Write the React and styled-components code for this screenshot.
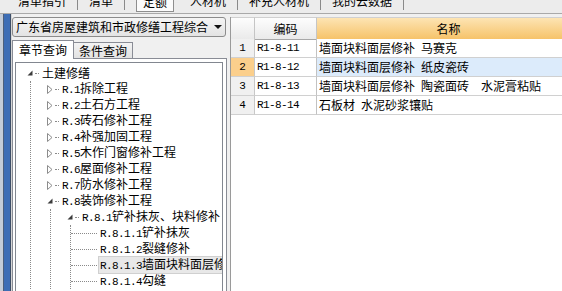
import React from "react"
import styled, { createGlobalStyle } from "styled-components"

const topTabs = [
    { label: "清单指引" },
    { sep: true },
    { label: "清单" },
    { sep: true },
    { label: "定额", active: true },
    { label: "人材机" },
    { sep: true },
    { label: "补充人材机" },
    { sep: true },
    { label: "我的云数据" },
    { sep: true },
]

const tree = [
    {
        name: "土建修缮",
        open: true,
        children: [
            { code: "R.1", name: "拆除工程", closed: true },
            { code: "R.2", name: "土石方工程", closed: true },
            { code: "R.3", name: "砖石修补工程", closed: true },
            { code: "R.4", name: "补强加固工程", closed: true },
            { code: "R.5", name: "木作门窗修补工程", closed: true },
            { code: "R.6", name: "屋面修补工程", closed: true },
            { code: "R.7", name: "防水修补工程", closed: true },
            {
                code: "R.8",
                name: "装饰修补工程",
                open: true,
                children: [
                    {
                        code: "R.8.1",
                        name: "铲补抹灰、块料修补",
                        open: true,
                        children: [
                            { code: "R.8.1.1", name: "铲补抹灰" },
                            { code: "R.8.1.2", name: "裂缝修补" },
                            { code: "R.8.1.3", name: "墙面块料面层修补", selected: true },
                            { code: "R.8.1.4", name: "勾缝" },
                        ],
                    },
                ],
            },
        ],
    },
]

// en spaces: the old bitmap font had a half-width space
const rows = [
    { no: 1, code: "R1-8-11", name: "墙面块料面层修补\u2002马赛克" },
    { no: 2, code: "R1-8-12", name: "墙面块料面层修补\u2002纸皮瓷砖", selected: true },
    { no: 3, code: "R1-8-13", name: "墙面块料面层修补\u2002陶瓷面砖\u2002\u2002水泥膏粘贴" },
    { no: 4, code: "R1-8-14", name: "石板材\u2002水泥砂浆镶贴" },
]

const Expander = ({ open }) => (
    <ExpanderBox>
        {open ? (
            <svg width="6" height="6" viewBox="0 0 6 6">
                <polygon points="5.5,0.5 5.5,5.5 0.5,5.5" fill="#3c3c3c" />
            </svg>
        ) : (
            <svg width="6" height="9" viewBox="0 0 6 9">
                <polygon points="0.5,0.5 5,4.5 0.5,8.5" fill="#fff" stroke="#8c8c8c" />
            </svg>
        )}
    </ExpanderBox>
)

const TreeNode = ({ node }) => {
    const hasKids = node.children || node.closed
    return (
        <>
            <TreeRow $leaf={!hasKids}>
                {hasKids ? <Expander open={node.open} /> : null}
                <Connector $leaf={!hasKids} />
                <NodeLabel $selected={node.selected}>
                    {node.code ? <Code>{node.code}</Code> : null}
                    {node.name}
                </NodeLabel>
            </TreeRow>
            {node.children ? (
                <Group>
                    {node.children.map((c) => (
                        <TreeNode key={c.code} node={c} />
                    ))}
                </Group>
            ) : null}
        </>
    )
}

const App = () => {
    return (
        <>
            <GlobalStyle />
            <Page>
                <TopBar>
                    <TabRow>
                        {topTabs.map((t, i) =>
                            t.sep ? <TopSep key={i} /> : <TopTab key={i} $active={t.active}>{t.label}</TopTab>
                        )}
                    </TabRow>
                </TopBar>
                <Main>
                    <EdgeStrip />
                    <LeftPanel>
                        <Combo>
                            <ComboText>广东省房屋建筑和市政修缮工程综合</ComboText>
                            <svg width="8" height="4" viewBox="0 0 8 4">
                                <polygon points="0,0 8,0 4,4" fill="#111" />
                            </svg>
                        </Combo>
                        <TabStrip>
                            <PanelTab $active>章节查询</PanelTab>
                            <PanelTab>条件查询</PanelTab>
                        </TabStrip>
                        <TabPage>
                            <TreeBox>
                                {tree.map((n) => (
                                    <TreeNode key={n.name} node={n} />
                                ))}
                            </TreeBox>
                        </TabPage>
                    </LeftPanel>
                    <Splitter />
                    <GridPane>
                        <GridHeader>
                            <HeadCell />
                            <HeadCell>编码</HeadCell>
                            <HeadCell $hot>名称</HeadCell>
                        </GridHeader>
                        {rows.map((r) => (
                            <GridRow key={r.no}>
                                <NumCell $selected={r.selected}>{r.no}</NumCell>
                                <CodeCell>{r.code}</CodeCell>
                                <NameCell $selected={r.selected}>{r.name}</NameCell>
                            </GridRow>
                        ))}
                    </GridPane>
                </Main>
            </Page>
        </>
    )
}

export default App

const GlobalStyle = createGlobalStyle`
    html, body {
        margin: 0;
        padding: 0;
        background: #f0f0f0;
        overflow: hidden;
    }
    body {
        font-family: "Noto Sans CJK SC", sans-serif;
        font-size: 12px;
        color: #000;
    }
`

const Page = styled.div`
    width: 562px;
    height: 291px;
    display: flex;
    flex-direction: column;
    overflow: hidden;
`

const TopBar = styled.div`
    height: 13px;
    flex-shrink: 0;
    overflow: hidden;
    background: #ececec;
    border-bottom: 1px solid #a9a9a9;
`

const TabRow = styled.div`
    display: flex;
    align-items: flex-start;
    gap: 11px;
    height: 19px;
    margin-top: -6px;
    padding-left: 18px;
`

const TopTab = styled.div`
    line-height: 14px;
    white-space: nowrap;
    ${(p) => p.$active && `
        height: 16px;
        padding: 0 6px;
        margin-right: 5px;
        border: 1px solid #8e8e8e;
        background: #fbfbfb;
    `}
`

const TopSep = styled.div`
    width: 1px;
    height: 16px;
    background: #8a8a8a;
`

const Main = styled.div`
    flex: 1;
    display: flex;
    min-height: 0;
`

const EdgeStrip = styled.div`
    width: 12px;
    flex-shrink: 0;
    background: linear-gradient(to right,
        #c4ccd8 0 3px, #4d5f7a 3px 4px, #3d6db5 4px 10px, #3e4f68 10px 11px, #d6d6d6 11px);
`

const LeftPanel = styled.div`
    width: 215px;
    flex-shrink: 0;
    display: flex;
    flex-direction: column;
    padding-top: 3px;
    box-sizing: border-box;
`

const Combo = styled.div`
    height: 20px;
    width: 214px;
    box-sizing: border-box;
    display: flex;
    align-items: center;
    padding: 0 3px 0 3px;
    border: 1px solid #8b8b8b;
    border-radius: 3px;
    background: linear-gradient(#f5f5f5, #e3e3e3);
`

const ComboText = styled.span`
    flex: 1;
    line-height: 18px;
    white-space: nowrap;
    overflow: hidden;
`

const TabStrip = styled.div`
    display: flex;
    align-items: flex-end;
    height: 18px;
    margin-top: 3px;
`

const PanelTab = styled.div`
    position: relative;
    box-sizing: border-box;
    height: ${(p) => (p.$active ? "19px" : "16px")};
    margin-bottom: ${(p) => (p.$active ? "-1px" : "0")};
    margin-left: ${(p) => (p.$active ? "0" : "-1px")};
    padding: 0 ${(p) => (p.$active ? "6px" : "5px")};
    line-height: ${(p) => (p.$active ? "17px" : "15px")};
    border: 1px solid #898c95;
    border-bottom: none;
    background: ${(p) => (p.$active ? "#fff" : "linear-gradient(#f3f3f3, #e2e2e2)")};
    z-index: ${(p) => (p.$active ? 1 : 0)};
    white-space: nowrap;
`

const TabPage = styled.div`
    flex: 1;
    min-height: 0;
    display: flex;
    padding: 3px 3px 0 2px;
    border: 1px solid #898c95;
    border-bottom: none;
    background: #fff;
`

const TreeBox = styled.div`
    flex: 1;
    min-width: 0;
    overflow: hidden;
    padding: 2px 0 0 10px;
    border: 1px solid #828790;
    border-bottom: none;
    background: #fff;
`

const TreeRow = styled.div`
    display: flex;
    align-items: center;
    height: 16px;
    margin-left: ${(p) => (p.$leaf ? "-15px" : "0")};
    white-space: nowrap;
`

const ExpanderBox = styled.span`
    width: 8px;
    height: 16px;
    display: flex;
    align-items: center;
    justify-content: center;
    flex-shrink: 0;
`

const Connector = styled.span`
    width: ${(p) => (p.$leaf ? "26px" : "4px")};
    margin: 0 ${(p) => (p.$leaf ? "1px 0 0" : "1px")};
    border-top: 1px dotted #8a8a8a;
    flex-shrink: 0;
`

const NodeLabel = styled.span`
    padding: 0 1px;
    line-height: 14px;
    border: 1px solid ${(p) => (p.$selected ? "#d0d0d0" : "transparent")};
    background: ${(p) => (p.$selected ? "#e8e8e8" : "transparent")};
`

const Code = styled.span`
    font-family: "Liberation Mono", monospace;
    font-size: 11px;
    letter-spacing: -0.6px;
`

const Group = styled.div`
    margin-left: 4px;
    padding-left: 15px;
    border-left: 1px dotted #8a8a8a;
`

const Splitter = styled.div`
    width: 3px;
    flex-shrink: 0;
`

const GridPane = styled.div`
    flex: 1;
    min-width: 0;
    overflow: hidden;
    margin-top: 3px;
    border-left: 1px solid #9a9a9a;
    background: #fff;
`

const GridHeader = styled.div`
    display: grid;
    grid-template-columns: 24px 62px 264px;
    height: 22px;
`

const HeadCell = styled.div`
    box-sizing: border-box;
    text-align: center;
    line-height: 21px;
    border-top: 1px solid #d0d0d0;
    border-right: 1px solid #c5c5c5;
    border-bottom: 1px solid #a8a8a8;
    background: ${(p) => (p.$hot ? "linear-gradient(#fde4b3, #f6c36a)" : "linear-gradient(#fdfdfd, #eaeaea)")};
`

const GridRow = styled.div`
    display: grid;
    grid-template-columns: 24px 62px 264px;
    height: 19px;
`

const NumCell = styled.div`
    box-sizing: border-box;
    text-align: center;
    line-height: 18px;
    font-family: "Liberation Mono", monospace;
    font-size: 11px;
    border-right: 1px solid #c8c8c8;
    border-bottom: 1px solid #d0d0d0;
    background: ${(p) => (p.$selected ? "#fbcf8c" : "#f0f0f0")};
`

const CodeCell = styled.div`
    box-sizing: border-box;
    padding-left: 2px;
    line-height: 18px;
    font-family: "Liberation Mono", monospace;
    font-size: 11px;
    letter-spacing: -0.6px;
    border-right: 1px solid #c2c2c2;
    border-bottom: 1px solid #d0d0d0;
`

const NameCell = styled.div`
    box-sizing: border-box;
    padding-left: 2px;
    line-height: 18px;
    white-space: pre;
    overflow: hidden;
    border-bottom: 1px solid #d0d0d0;
    background: ${(p) => (p.$selected ? "#dcebfb" : "#fff")};
`
